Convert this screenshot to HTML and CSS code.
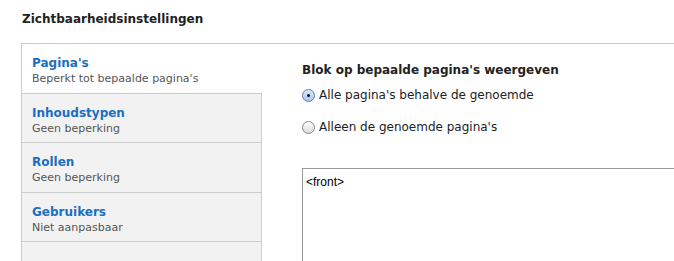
FILE: index.html
```html
<!DOCTYPE html>
<html>
<head>
<meta charset="utf-8">
<link rel="stylesheet" href="styles.css">
</head>
<body>
<h2 class="section-title">Zichtbaarheidsinstellingen</h2>
<div class="vtabs">
  <ul class="tab-list">
    <li class="tab active"><a class="tab-title">Pagina's</a><span class="tab-summary">Beperkt tot bepaalde pagina's</span></li>
    <li class="tab"><a class="tab-title">Inhoudstypen</a><span class="tab-summary">Geen beperking</span></li>
    <li class="tab"><a class="tab-title">Rollen</a><span class="tab-summary">Geen beperking</span></li>
    <li class="tab"><a class="tab-title">Gebruikers</a><span class="tab-summary">Niet aanpasbaar</span></li>
  </ul>
  <div class="pane">
    <div class="pane-label">Blok op bepaalde pagina's weergeven</div>
    <label class="radio-row first"><span class="radio checked"></span>Alle pagina's behalve de genoemde</label>
    <label class="radio-row"><span class="radio"></span>Alleen de genoemde pagina's</label>
    <div class="textarea">&lt;front&gt;</div>
  </div>
</div>
</body>
</html>
```
FILE: styles.css
```css
html, body {
  margin: 0;
  padding: 0;
  background: #fff;
  font-family: "DejaVu Sans", "Liberation Sans", sans-serif;
  color: #333;
  overflow: hidden;
}
body {
  height: 261px;
}
.section-title {
  margin: 0;
  padding: 11px 0 0 22px;
  font-size: 12px;
  font-weight: bold;
  color: #222;
  line-height: 16px;
  height: 32px;
  box-sizing: border-box;
}
.vtabs {
  margin-top: 11px;
  margin-left: 21px;
  border-top: 1px solid #ccc;
  border-left: 1px solid #ccc;
  display: flex;
  height: 218px;
  box-sizing: border-box;
}
.tab-list {
  list-style: none;
  margin: 0;
  padding: 0;
  width: 239px;
  flex: none;
  background: #f2f2f2;
  border-right: 1px solid #ccc;
}
.tab {
  border-bottom: 1px solid #ccc;
  padding: 11px 0 0 10px;
  box-sizing: border-box;
  height: 50px;
}
.tab:nth-child(even) {
  height: 49px;
}
.tab.active {
  background: #fff;
  margin-right: -1px;
}
.tab-title {
  display: block;
  color: #1a6fc2;
  font-weight: bold;
  font-size: 12px;
  line-height: 16px;
}
.tab-summary {
  display: block;
  color: #555;
  font-size: 11px;
  line-height: 16px;
}
.pane {
  flex: 1;
  display: flex;
  flex-direction: column;
  padding: 18px 0 0 40px;
}
.pane-label {
  font-weight: bold;
  font-size: 12px;
  line-height: 16px;
  color: #222;
  margin-bottom: 9px;
}
.radio-row {
  display: flex;
  align-items: center;
  font-size: 12px;
  line-height: 16px;
  color: #222;
}
.radio-row.first {
  margin-bottom: 16px;
}
.radio {
  width: 13px;
  height: 13px;
  border-radius: 50%;
  border: 1px solid #8a8a8a;
  background: linear-gradient(#fdfdfd, #dcdcdc);
  box-sizing: border-box;
  margin-right: 4px;
  position: relative;
}
.radio.checked {
  border-color: #5a7fb5;
  background: linear-gradient(#dbe8f8, #a9c6ec);
}
.radio.checked::after {
  content: "";
  position: absolute;
  left: 4px;
  top: 4px;
  width: 3px;
  height: 3px;
  border-radius: 50%;
  background: #111;
}
.textarea {
  margin-top: 33px;
  flex: 1;
  border-top: 1px solid #999;
  border-left: 1px solid #999;
  padding: 6px 0 0 3px;
  font-family: "Liberation Sans", Arial, sans-serif;
  font-size: 12px;
  color: #000;
}
```
